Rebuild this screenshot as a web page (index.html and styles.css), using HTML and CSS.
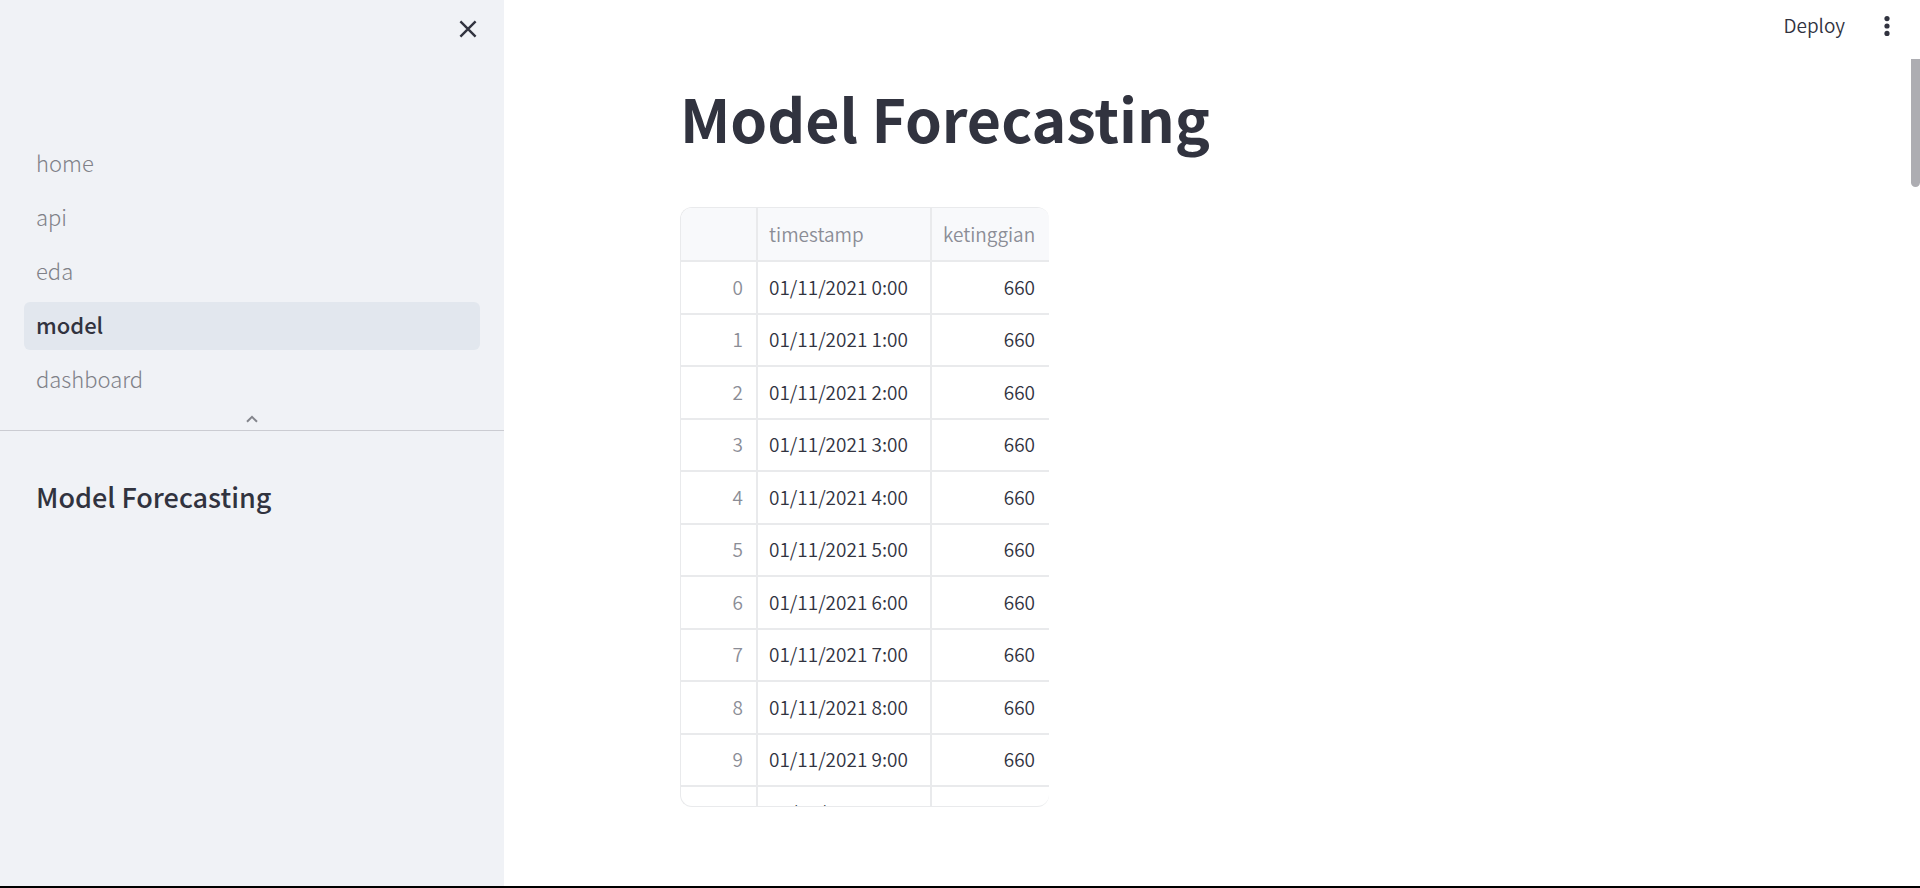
FILE: index.html
```html
<!DOCTYPE html>
<html lang="en">
<head>
<meta charset="utf-8">
<title>model</title>
<link rel="stylesheet" href="styles.css">
</head>
<body>
<div class="app">
  <aside class="sidebar">
    <div class="sidebar-top">
      <button class="icon-button" type="button" aria-label="Close sidebar">
        <svg width="18" height="18" viewBox="0 0 18 18"><path d="M1.4 1.4 16.6 16.6M16.6 1.4 1.4 16.6" fill="none" stroke="currentColor" stroke-width="2.4"/></svg>
      </button>
    </div>
    <nav class="nav">
      <ul class="nav-list">
        <li><a class="nav-link" href="#home">home</a></li>
        <li><a class="nav-link" href="#api">api</a></li>
        <li><a class="nav-link" href="#eda">eda</a></li>
        <li><a class="nav-link nav-link-active" href="#model" aria-current="page">model</a></li>
        <li><a class="nav-link" href="#dashboard">dashboard</a></li>
      </ul>
      <button class="nav-toggle" type="button" aria-label="Collapse navigation">
        <svg width="12" height="8" viewBox="0 0 12 8"><path d="M1 6.8 6 1.9l5 4.9" fill="none" stroke="currentColor" stroke-width="2"/></svg>
      </button>
    </nav>
    <h2 class="sidebar-title">Model Forecasting</h2>
  </aside>
  <div class="page">
    <header class="toolbar">
      <button class="deploy" type="button">Deploy</button>
      <button class="icon-button" type="button" aria-label="Main menu">
        <svg width="6" height="20" viewBox="0 0 6 20"><g fill="currentColor"><circle cx="3" cy="2.6" r="2.6"/><circle cx="3" cy="10" r="2.6"/><circle cx="3" cy="17.4" r="2.6"/></g></svg>
      </button>
    </header>
    <main class="content">
      <h1 class="title">Model Forecasting</h1>
      <div class="frame">
        <table class="grid">
          <colgroup><col class="col-index"><col class="col-time"><col class="col-value"></colgroup>
          <thead><tr><th></th><th>timestamp</th><th>ketinggian</th></tr></thead>
          <tbody>
            <tr><th>0</th><td>01/11/2021 0:00</td><td>660</td></tr>
            <tr><th>1</th><td>01/11/2021 1:00</td><td>660</td></tr>
            <tr><th>2</th><td>01/11/2021 2:00</td><td>660</td></tr>
            <tr><th>3</th><td>01/11/2021 3:00</td><td>660</td></tr>
            <tr><th>4</th><td>01/11/2021 4:00</td><td>660</td></tr>
            <tr><th>5</th><td>01/11/2021 5:00</td><td>660</td></tr>
            <tr><th>6</th><td>01/11/2021 6:00</td><td>660</td></tr>
            <tr><th>7</th><td>01/11/2021 7:00</td><td>660</td></tr>
            <tr><th>8</th><td>01/11/2021 8:00</td><td>660</td></tr>
            <tr><th>9</th><td>01/11/2021 9:00</td><td>660</td></tr>
            <tr><th>10</th><td>01/11/2021 10:00</td><td>660</td></tr>
          </tbody>
        </table>
      </div>
    </main>
    <div class="scroll-thumb"></div>
  </div>
</div>
</body>
</html>
```
FILE: styles.css
```css
* { box-sizing: border-box; }

body {
  margin: 0;
  color: #31333f;
  background: #fff;
  font-family: "Noto Sans CJK SC", "Noto Sans", sans-serif;
  font-size: 22px;
}

button {
  padding: 0;
  border: 0;
  background: none;
  color: inherit;
  font: inherit;
}

svg { display: block; }

.app {
  display: flex;
  height: 100vh;
  overflow: hidden;
  border-bottom: 2px solid #000;
}

.sidebar {
  flex: 0 0 504px;
  background: #f0f2f6;
}

.sidebar-top {
  display: flex;
  justify-content: flex-end;
  height: 140px;
  padding: 20px 27px;
}

.icon-button { align-self: flex-start; }

.nav {
  border-bottom: 1px solid #cbccd2;
}

.nav-list {
  display: flex;
  flex-direction: column;
  gap: 6px;
  margin: 0;
  padding: 0 24px;
  list-style: none;
}

.nav-link {
  display: block;
  padding: 0 12px 4px;
  border-radius: 6px;
  color: #7f8188;
  font-weight: 300;
  line-height: 44px;
  text-decoration: none;
}

.nav-link-active {
  background: #e2e7ee;
  color: #31333f;
  font-weight: 500;
}

.nav-toggle {
  display: flex;
  align-items: center;
  justify-content: center;
  width: 100%;
  height: 26px;
  padding-top: 3px;
  color: #83858c;
}

.sidebar-title {
  margin: 0;
  padding: 48px 36px;
  font-size: 27px;
  font-weight: 500;
  line-height: 36px;
}

.page {
  position: relative;
  flex: 1;
  min-width: 0;
}

.toolbar {
  display: flex;
  align-items: center;
  justify-content: flex-end;
  gap: 39px;
  height: 59px;
  padding: 0 30px 7px;
}

.toolbar .icon-button { align-self: center; }

.deploy {
  padding-bottom: 2px;
  font-size: 19px;
  font-weight: 350;
  line-height: 28px;
}

.content {
  max-width: 1112px;
  margin: 0 auto;
  padding: 19px 32px 0 24px;
}

.title {
  margin: 0 0 49px;
  font-size: 59px;
  font-weight: 700;
  line-height: 80px;
}

.frame {
  width: 369px;
  height: 600px;
  overflow: hidden;
  border: 1px solid #e9eaec;
  border-right: 0;
  border-radius: 12px;
}

.grid {
  width: 100%;
  border-spacing: 0;
  table-layout: fixed;
  font-size: 19px;
  line-height: 28px;
  white-space: nowrap;
}

.col-index { width: 77px; }
.col-time { width: 174px; }

.grid th,
.grid td {
  height: 52px;
  padding: 0 13px 2px 11px;
  border-right: 2px solid #e9eaec;
  border-bottom: 2px solid #e9eaec;
  font-weight: 350;
  text-align: left;
}

.grid th { color: #8b8d96; }

.grid thead th {
  height: 54px;
  padding-bottom: 0;
  background: #f8f9fb;
}

.grid tbody tr:nth-child(odd) > * { height: 53px; }

.grid tbody th,
.grid tbody td:last-child { text-align: right; }

.grid th:last-child,
.grid td:last-child {
  border-right: 0;
}

.grid td:last-child { padding-right: 14px; }

.scroll-thumb {
  position: absolute;
  top: 59px;
  right: 0;
  width: 9px;
  height: 128px;
  border-radius: 0 0 5px 5px;
  background: #adadb2;
}
```
